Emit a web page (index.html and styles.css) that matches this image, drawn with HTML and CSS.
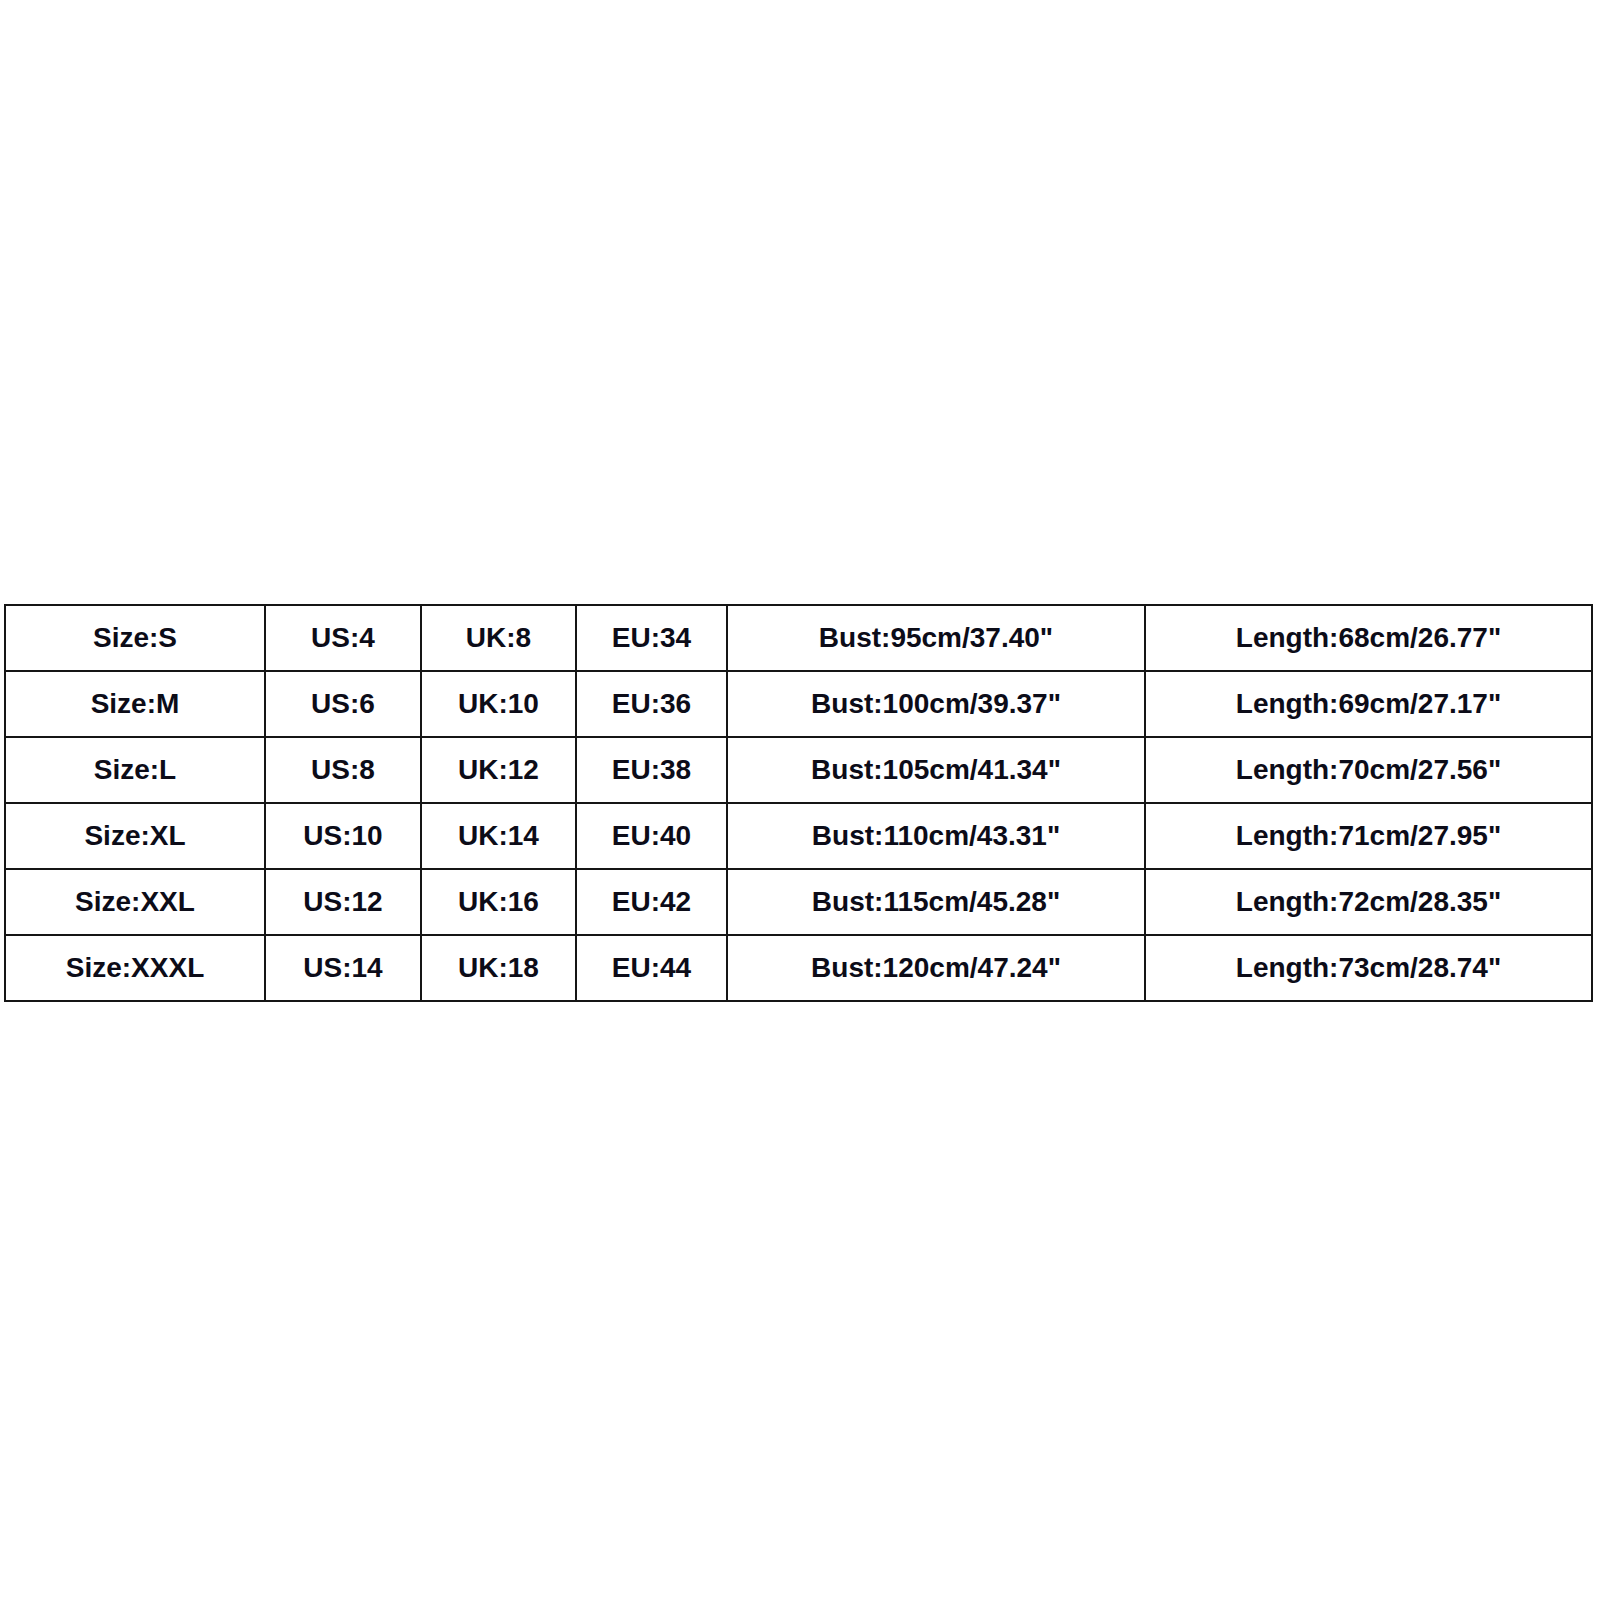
FILE: index.html
```html
<!DOCTYPE html>
<html>
<head>
<meta charset="utf-8">
<link rel="stylesheet" href="styles.css">
</head>
<body>
<div class="page">
  <table class="size-table">
    <colgroup>
      <col class="c1"><col class="c2"><col class="c3"><col class="c4"><col class="c5"><col class="c6">
    </colgroup>
    <tbody>
      <tr><td>Size:S</td><td>US:4</td><td>UK:8</td><td>EU:34</td><td>Bust:95cm/37.40"</td><td>Length:68cm/26.77"</td></tr>
      <tr><td>Size:M</td><td>US:6</td><td>UK:10</td><td>EU:36</td><td>Bust:100cm/39.37"</td><td>Length:69cm/27.17"</td></tr>
      <tr><td>Size:L</td><td>US:8</td><td>UK:12</td><td>EU:38</td><td>Bust:105cm/41.34"</td><td>Length:70cm/27.56"</td></tr>
      <tr><td>Size:XL</td><td>US:10</td><td>UK:14</td><td>EU:40</td><td>Bust:110cm/43.31"</td><td>Length:71cm/27.95"</td></tr>
      <tr><td>Size:XXL</td><td>US:12</td><td>UK:16</td><td>EU:42</td><td>Bust:115cm/45.28"</td><td>Length:72cm/28.35"</td></tr>
      <tr><td>Size:XXXL</td><td>US:14</td><td>UK:18</td><td>EU:44</td><td>Bust:120cm/47.24"</td><td>Length:73cm/28.74"</td></tr>
    </tbody>
  </table>
</div>
</body>
</html>
```
FILE: styles.css
```css
html, body {
  margin: 0;
  padding: 0;
  background: #ffffff;
}
.page {
  width: 1600px;
  height: 1600px;
  padding-top: 604px;
  padding-left: 4px;
  box-sizing: border-box;
}
.size-table {
  border-collapse: collapse;
  table-layout: fixed;
  width: 1589px;
  font-family: "Liberation Sans", Arial, sans-serif;
  font-weight: bold;
  font-size: 28px;
  color: #0c0c18;
}
.c1 { width: 260px; }
.c2 { width: 156px; }
.c3 { width: 155px; }
.c4 { width: 151px; }
.c5 { width: 418px; }
.c6 { width: 447px; }
.size-table td {
  border: 2px solid #151515;
  height: 64px;
  padding: 0;
  text-align: center;
  vertical-align: middle;
  white-space: nowrap;
}
```
